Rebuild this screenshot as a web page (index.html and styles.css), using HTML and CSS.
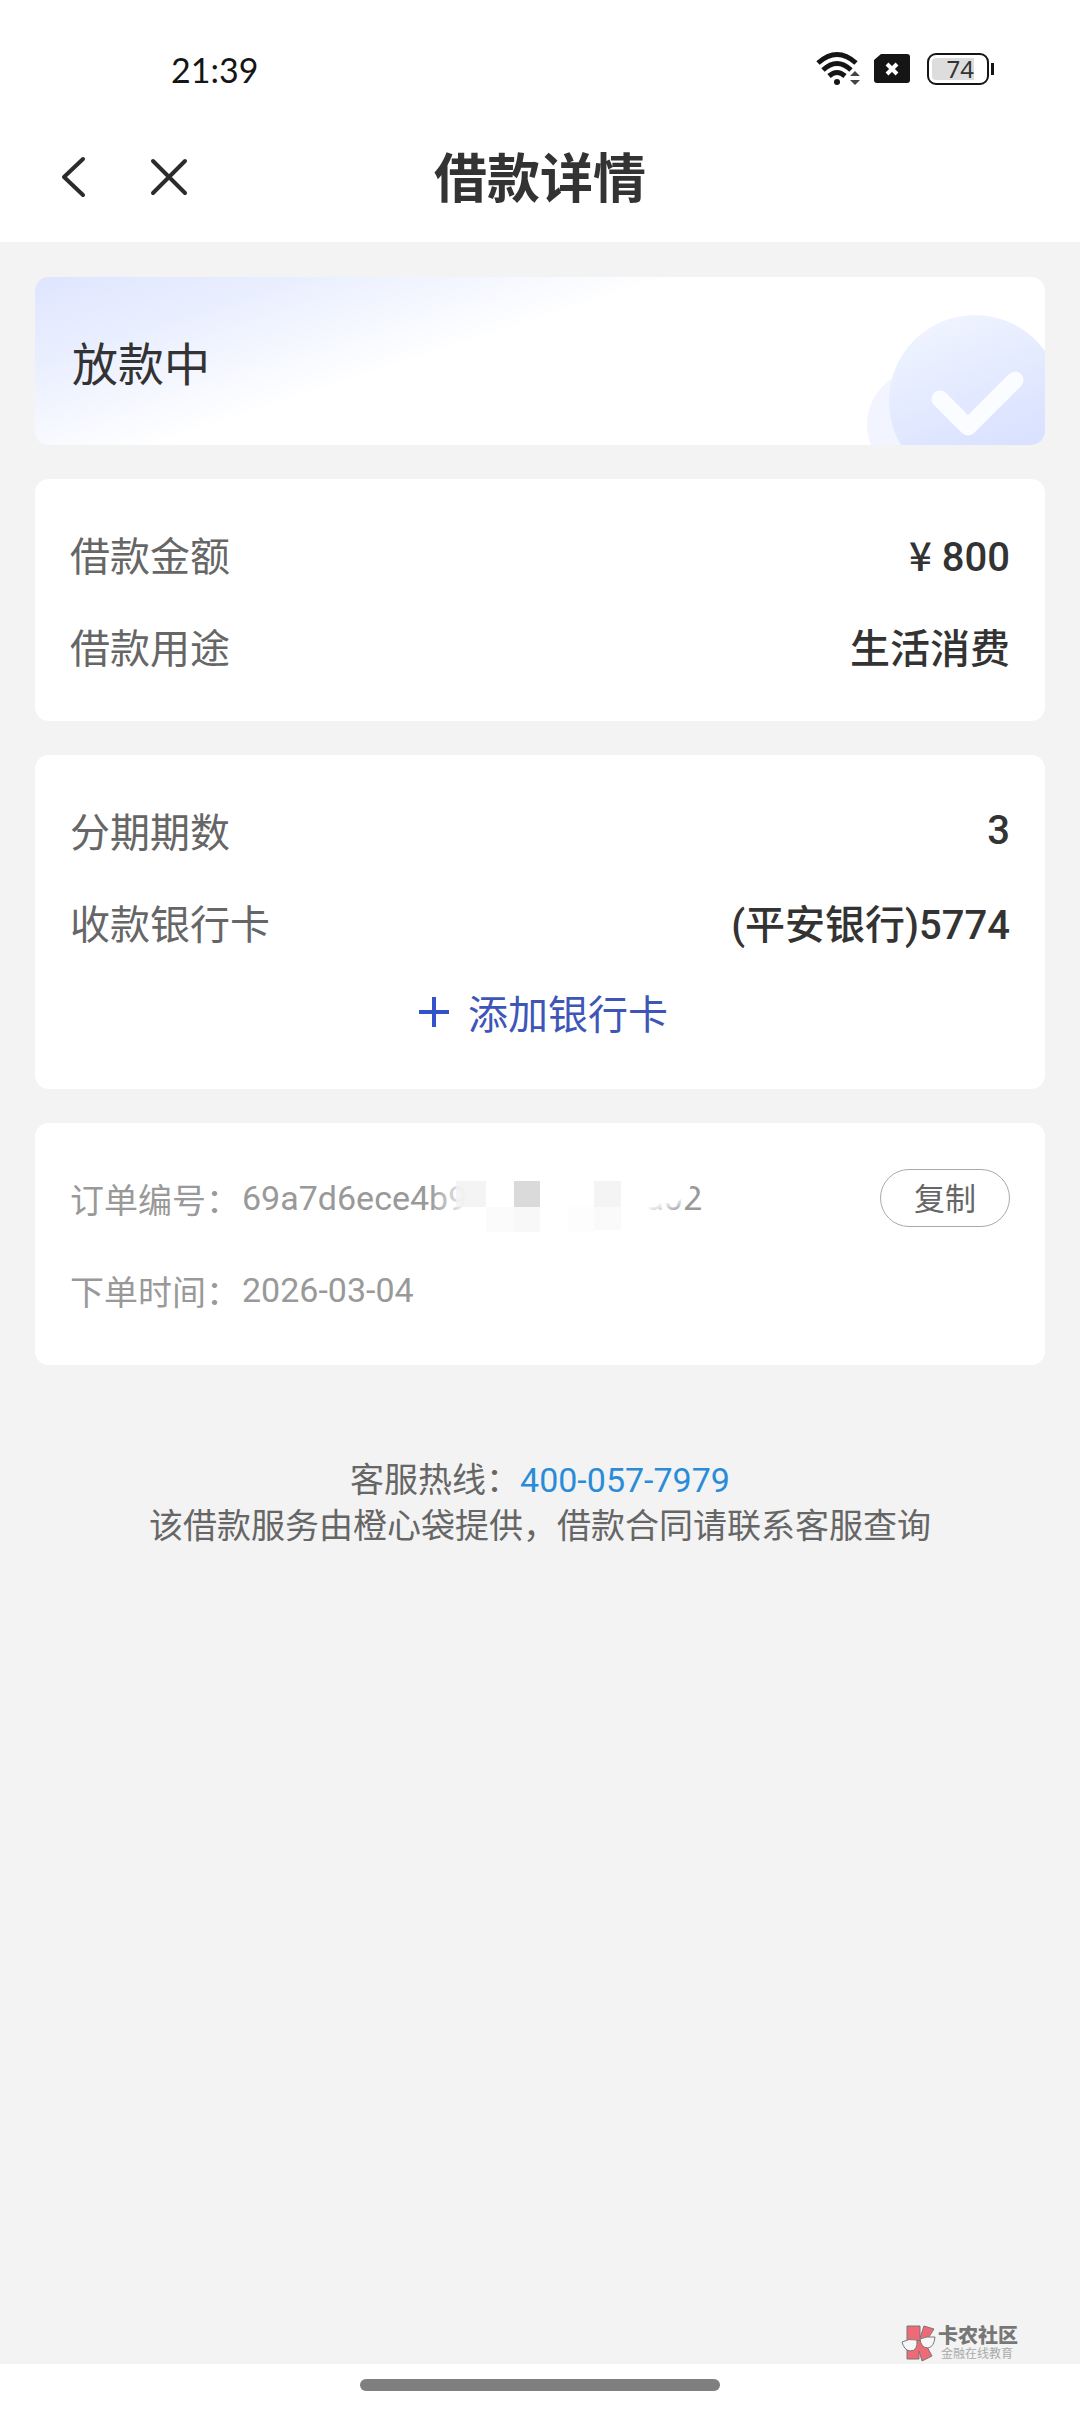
FILE: index.html
```html
<!DOCTYPE html>
<html lang="zh-CN">
<head>
<meta charset="utf-8">
<meta name="viewport" content="width=device-width, initial-scale=1">
<title>借款详情</title>
<link rel="stylesheet" href="styles.css">
</head>
<body>
<div class="screen">
  <div class="statusbar">
    <span class="clock">21:39</span>
    <div class="indicators">
      <svg class="wifi" width="46" height="36" viewBox="0 0 46 36" aria-hidden="true">
        <g fill="none" stroke="#151515" stroke-width="5">
          <path d="M2 12Q21 -5 40 12"/>
          <path d="M7 19Q21 6 35 19"/>
          <path d="M13 25Q21 18 29 25"/>
        </g>
        <circle cx="21" cy="31" r="3" fill="#151515"/>
        <path d="M34 25l5 -5 5 5zM34 29l5 5 5 -5z" fill="#444"/>
      </svg>
      <svg class="sim" width="36" height="30" viewBox="0 0 36 30" aria-hidden="true">
        <path d="M7 0H33Q36 0 36 3V26Q36 29 33 29H3Q0 29 0 26V6Z" fill="#151515"/>
        <path d="M13 10l10 10M23 10l-10 10" stroke="#fff" stroke-width="4"/>
      </svg>
      <div class="battery"><span class="battery-level">74</span></div>
    </div>
  </div>

  <header class="navbar">
    <div class="nav-actions">
      <button class="icon-button" type="button" aria-label="返回">
        <svg width="42" height="46" viewBox="0 0 42 46"><path d="M31 5L12 23 31 41" fill="none" stroke="#2b2b2b" stroke-width="4" stroke-linecap="round" stroke-linejoin="round"/></svg>
      </button>
      <button class="icon-button" type="button" aria-label="关闭">
        <svg width="42" height="46" viewBox="0 0 42 46"><path d="M5 7L37 39M37 7L5 39" fill="none" stroke="#2b2b2b" stroke-width="4" stroke-linecap="round"/></svg>
      </button>
    </div>
    <h1 class="title">借款详情</h1>
  </header>

  <main class="content">
    <section class="card status-card">
      <h2 class="status-text">放款中</h2>
      <svg class="status-art" width="180" height="132" viewBox="0 0 180 132" aria-hidden="true">
        <defs>
          <linearGradient id="disc" x1="0.2" y1="0" x2="0.6" y2="1">
            <stop offset="0" stop-color="#f1f5ff"/>
            <stop offset="0.75" stop-color="#dbe3ff"/>
            <stop offset="1" stop-color="#d6e0ff"/>
          </linearGradient>
        </defs>
        <circle cx="58" cy="112" r="56" fill="#f2f5ff"/>
        <circle cx="110" cy="88" r="86" fill="url(#disc)"/>
        <path d="M75 86L103 114 150 67" fill="none" stroke="#fbfcff" stroke-width="17" stroke-linecap="round" stroke-linejoin="round"/>
      </svg>
    </section>

    <section class="card">
      <dl class="rows">
        <div class="row"><dt>借款金额</dt><dd><span class="currency">¥</span> 800</dd></div>
        <div class="row"><dt>借款用途</dt><dd>生活消费</dd></div>
      </dl>
    </section>

    <section class="card">
      <dl class="rows">
        <div class="row"><dt>分期期数</dt><dd>3</dd></div>
        <div class="row"><dt>收款银行卡</dt><dd>(平安银行)5774</dd></div>
      </dl>
      <button class="add-card" type="button">
        <svg width="32" height="32" viewBox="0 0 32 32" aria-hidden="true"><path d="M16 1V31M1 16H31" stroke="#3253cc" stroke-width="4"/></svg>
        添加银行卡
      </button>
    </section>

    <section class="card order">
      <div class="row">
        <div class="order-line">
          <span>订单编号：</span>
          <span class="order-number">
            <span>69a7d6ece4b9</span><span>a02</span>
            <svg class="mosaic" width="300" height="80" viewBox="0 0 300 80" aria-hidden="true">
              <defs>
                <linearGradient id="fadeIn"><stop offset="0" stop-color="#fff" stop-opacity="0"/><stop offset="1" stop-color="#fff"/></linearGradient>
                <linearGradient id="fadeTail" x1="0.4" y1="0.4" x2="0.65" y2="1"><stop offset="0.5" stop-color="#fff"/><stop offset="1" stop-color="#fff" stop-opacity="0"/></linearGradient>
              </defs>
              <rect x="0" y="10" width="40" height="60" fill="url(#fadeIn)"/>
              <rect x="40" y="10" width="166" height="60" fill="#fff"/>
              <path d="M206 10H262Q262 40 245 54H206Z" fill="url(#fadeTail)"/>
              <path d="M206 10H266Q262 32 246 43H206Z" fill="#fff"/>
              <rect x="26" y="21" width="30" height="26" fill="#f1f1f1" opacity="0.8"/>
              <rect x="84" y="21" width="26" height="26" fill="#dadada"/>
              <rect x="164" y="21" width="27" height="26" fill="#f4f4f4"/>
              <rect x="56" y="47" width="28" height="25" fill="#fbfbfb"/>
              <rect x="84" y="47" width="26" height="25" fill="#f8f8f8"/>
              <rect x="138" y="47" width="26" height="25" fill="#fdfdfd"/>
              <rect x="164" y="47" width="27" height="23" fill="#fafafa"/>
            </svg>
          </span>
        </div>
        <button class="copy" type="button">复制</button>
      </div>
      <div class="row">
        <div class="order-line"><span>下单时间：</span><span>2026-03-04</span></div>
      </div>
    </section>

    <footer class="support">
      <p>客服热线：<a href="tel:400-057-7979">400-057-7979</a></p>
      <p>该借款服务由橙心袋提供，借款合同请联系客服查询</p>
    </footer>
  </main>

  <div class="brand">
    <svg width="36" height="38" viewBox="0 0 36 38" aria-hidden="true">
      <path d="M6 2H19V14L23 2L33 5L24 19L31 32L21 37L18 27V35H6Z" fill="#ee6a76" stroke="#777" stroke-width="1"/>
      <path d="M1 18Q8 14 16 16Q17 27 9 27Q3 26 1 18ZM19 15Q25 12 34 13Q33 23 27 24Q20 24 19 15ZM16 17L19 16" fill="#f6f6f6" stroke="#777" stroke-width="1"/>
    </svg>
    <div class="brand-text">
      <strong>卡农社区</strong>
      <small>金融在线教育</small>
    </div>
  </div>

  <div class="gesture-bar"><span class="gesture-pill"></span></div>
</div>
</body>
</html>
```

FILE: styles.css
```css
* {
  box-sizing: border-box;
}

body,
h1,
h2,
p,
dl,
dd {
  margin: 0;
}

body {
  background: #f3f3f3;
  color: #333;
  font-family: Roboto, "Noto Sans CJK SC", sans-serif;
  font-size: 40px;
}

button {
  padding: 0;
  border: 0;
  background: none;
  font: inherit;
}

svg {
  display: block;
  flex: none;
}

.screen {
  display: flex;
  flex-direction: column;
  min-height: 100vh;
}

.statusbar {
  display: flex;
  align-items: center;
  justify-content: space-between;
  height: 112px;
  padding: 26px 85px 0 171px;
  background: #fff;
}

.clock {
  color: #151515;
  font-family: Lato, sans-serif;
  font-size: 34px;
}

.indicators {
  display: flex;
  align-items: center;
}

.sim {
  margin-left: 12px;
}

.battery {
  position: relative;
  display: flex;
  width: 62px;
  height: 32px;
  margin: 0 6px 0 17px;
  padding: 3px;
  border: 2px solid #151515;
  border-radius: 9px;
}

.battery::after {
  content: "";
  position: absolute;
  top: 8px;
  right: -7px;
  width: 3px;
  height: 12px;
  background: #151515;
}

.battery-level {
  width: 42px;
  border-radius: 4px 0 0 4px;
  background: #ddd;
  color: #333;
  font-family: "Noto Sans", sans-serif;
  font-size: 24px;
  line-height: 22px;
  text-align: right;
}

.navbar {
  display: grid;
  grid-template-columns: 1fr auto 1fr;
  align-items: center;
  height: 130px;
  padding: 0 52px;
  background: #fff;
}

.nav-actions {
  display: flex;
  gap: 54px;
}

.title {
  padding-top: 6px;
  font-size: 53px;
  line-height: 80px;
  font-weight: 700;
}

.content {
  display: flex;
  flex: 1;
  flex-direction: column;
  gap: 34px;
  padding: 35px;
}

.card {
  padding: 29px 35px;
  border-radius: 14px;
  background: #fff;
}

.status-card {
  position: relative;
  display: flex;
  align-items: center;
  height: 168px;
  padding: 0 37px;
  overflow: hidden;
  background: linear-gradient(162deg, #dfe5ff 0%, #eaefff 18%, #fff 42%);
}

.status-text {
  font-size: 46px;
  font-weight: 400;
}

.status-art {
  position: absolute;
  right: 0;
  bottom: 0;
}

.row {
  display: flex;
  align-items: center;
  justify-content: space-between;
  height: 92px;
}

dt {
  color: #666;
}

dd {
  font-weight: 500;
}

.currency {
  font-family: "Noto Sans CJK SC", sans-serif;
}

.add-card {
  display: flex;
  align-items: center;
  justify-content: center;
  gap: 18px;
  width: 100%;
  height: 88px;
  margin-bottom: 4px;
  padding-left: 6px;
  color: #3d56b8;
}

.order {
  color: #999;
  font-size: 34px;
}

.order-line {
  display: flex;
  align-items: center;
  gap: 2px;
}

.order-number {
  position: relative;
  display: flex;
  justify-content: space-between;
  width: 460px;
}

.mosaic {
  position: absolute;
  top: -18px;
  left: 188px;
}

.copy {
  width: 130px;
  height: 58px;
  padding-bottom: 4px;
  border: 1px solid #aaa;
  border-radius: 29px;
  color: #666;
  font-size: 31px;
}

.support {
  padding-top: 58px;
  color: #666;
  font-size: 34px;
  line-height: 46px;
  text-align: center;
}

.support a {
  color: #2a8cd8;
  text-decoration: none;
}

.brand {
  display: flex;
  align-self: flex-end;
  align-items: center;
  gap: 1px;
  height: 42px;
  margin-right: 62px;
  color: #777;
}

.brand-text {
  display: flex;
  flex-direction: column;
}

.brand strong {
  font-size: 20px;
  font-weight: 900;
  line-height: 22px;
}

.brand small {
  padding-left: 3px;
  color: #aaa;
  font-size: 12px;
  line-height: 14px;
}

.gesture-bar {
  display: flex;
  align-items: center;
  justify-content: center;
  height: 48px;
  padding-bottom: 6px;
  background: #fff;
}

.gesture-pill {
  width: 360px;
  height: 12px;
  border-radius: 6px;
  background: #7f7f7f;
}
```
